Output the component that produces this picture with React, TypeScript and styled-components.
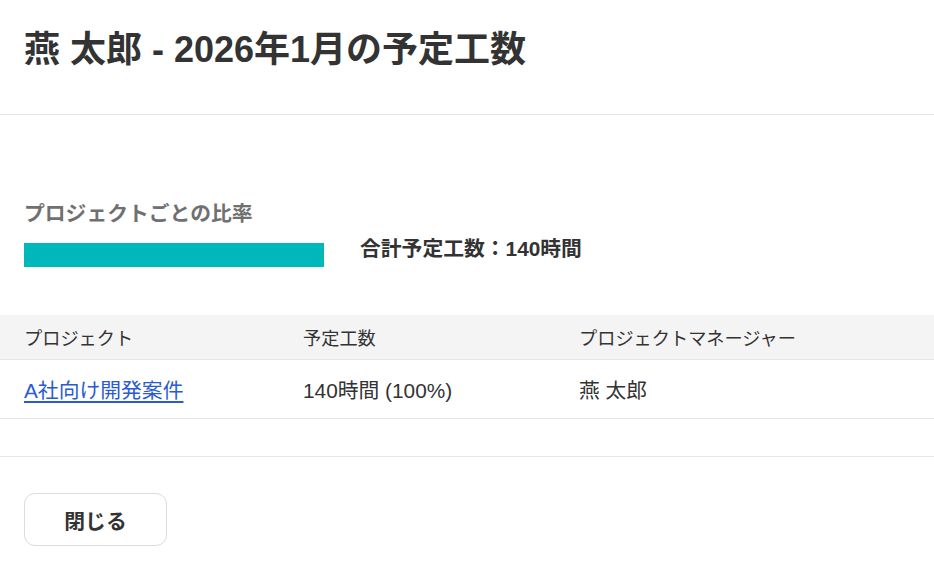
import React from "react";
import styled, { createGlobalStyle } from "styled-components";

const GlobalStyle = createGlobalStyle`
  html, body {
    margin: 0;
    padding: 0;
    background: #ffffff;
  }
  body {
    font-family: "Liberation Sans", "Noto Sans CJK JP", sans-serif;
    color: #333333;
  }
  * {
    box-sizing: border-box;
  }
`;

const Page = styled.div`
  width: 934px;
  min-height: 568px;
  display: flex;
  flex-direction: column;
  background: #ffffff;
`;

const Header = styled.header`
  padding: 24px 24px 39px;
  border-bottom: 1px solid #e6e6e6;
`;

const Title = styled.h1`
  margin: 0;
  font-size: 36px;
  line-height: 51px;
  font-weight: 700;
  color: #333333;
`;

const Body = styled.section`
  padding-top: 84px;
  padding-bottom: 37px;
`;

const Summary = styled.div`
  padding: 0 24px;
  display: flex;
  flex-direction: column;
  gap: 7px;
`;

const SectionLabel = styled.h2`
  margin: 0;
  font-size: 20.8px;
  line-height: 30px;
  font-weight: 700;
  color: #707070;
`;

const RatioRow = styled.div`
  display: flex;
  align-items: flex-start;
  gap: 36px;
`;

const RatioBar = styled.div`
  margin-top: 7px;
  width: 300px;
  height: 24px;
  display: flex;
`;

const RatioSegment = styled.div<{ $color: string }>`
  height: 100%;
  background: ${(p) => p.$color};
`;

const TotalText = styled.div`
  font-size: 20.8px;
  line-height: 26px;
  font-weight: 700;
  color: #333333;
`;

const Table = styled.div`
  margin-top: 48px;
  display: grid;
  grid-template-columns: 279px 276px 1fr;
`;

const HeadCell = styled.div`
  height: 45px;
  padding: 0 24px;
  display: flex;
  align-items: center;
  background: #f5f4f5;
  border-bottom: 1px solid #e4e4e4;
  font-size: 18.2px;
  color: #333333;
`;

const Cell = styled.div`
  height: 59px;
  padding: 0 24px;
  display: flex;
  align-items: center;
  border-bottom: 1px solid #e4e4e4;
  font-size: 20.8px;
  color: #333333;
`;

const ProjectLink = styled.a`
  color: #2a5bd0;
  text-decoration: underline;
  text-underline-offset: 3px;
  cursor: pointer;
`;

const Footer = styled.footer`
  border-top: 1px solid #e6e6e6;
  padding: 36px 24px 22px;
`;

const CloseButton = styled.button`
  width: 143px;
  height: 53px;
  border: 1px solid #dcdcdc;
  border-radius: 11px;
  background: #ffffff;
  font-family: inherit;
  font-size: 20.8px;
  font-weight: 700;
  color: #333333;
  cursor: pointer;
`;

const projects = [
  {
    name: "A社向け開発案件",
    hours: 140,
    manager: "燕 太郎",
    color: "#00b8ba",
  },
];

export default function App() {
  const total = projects.reduce((s, p) => s + p.hours, 0);
  return (
    <Page>
      <GlobalStyle />
      <Header>
        <Title>燕 太郎 - 2026年1月の予定工数</Title>
      </Header>
      <Body>
        <Summary>
          <SectionLabel>プロジェクトごとの比率</SectionLabel>
          <RatioRow>
            <RatioBar>
              {projects.map((p) => (
                <RatioSegment
                  key={p.name}
                  $color={p.color}
                  style={{ width: `${(p.hours / total) * 100}%` }}
                />
              ))}
            </RatioBar>
            <TotalText>合計予定工数：{total}時間</TotalText>
          </RatioRow>
        </Summary>
        <Table>
          <HeadCell>プロジェクト</HeadCell>
          <HeadCell>予定工数</HeadCell>
          <HeadCell>プロジェクトマネージャー</HeadCell>
          {projects.map((p) => (
            <React.Fragment key={p.name}>
              <Cell>
                <ProjectLink>{p.name}</ProjectLink>
              </Cell>
              <Cell>
                {p.hours}時間 ({Math.round((p.hours / total) * 100)}%)
              </Cell>
              <Cell>{p.manager}</Cell>
            </React.Fragment>
          ))}
        </Table>
      </Body>
      <Footer>
        <CloseButton>閉じる</CloseButton>
      </Footer>
    </Page>
  );
}
